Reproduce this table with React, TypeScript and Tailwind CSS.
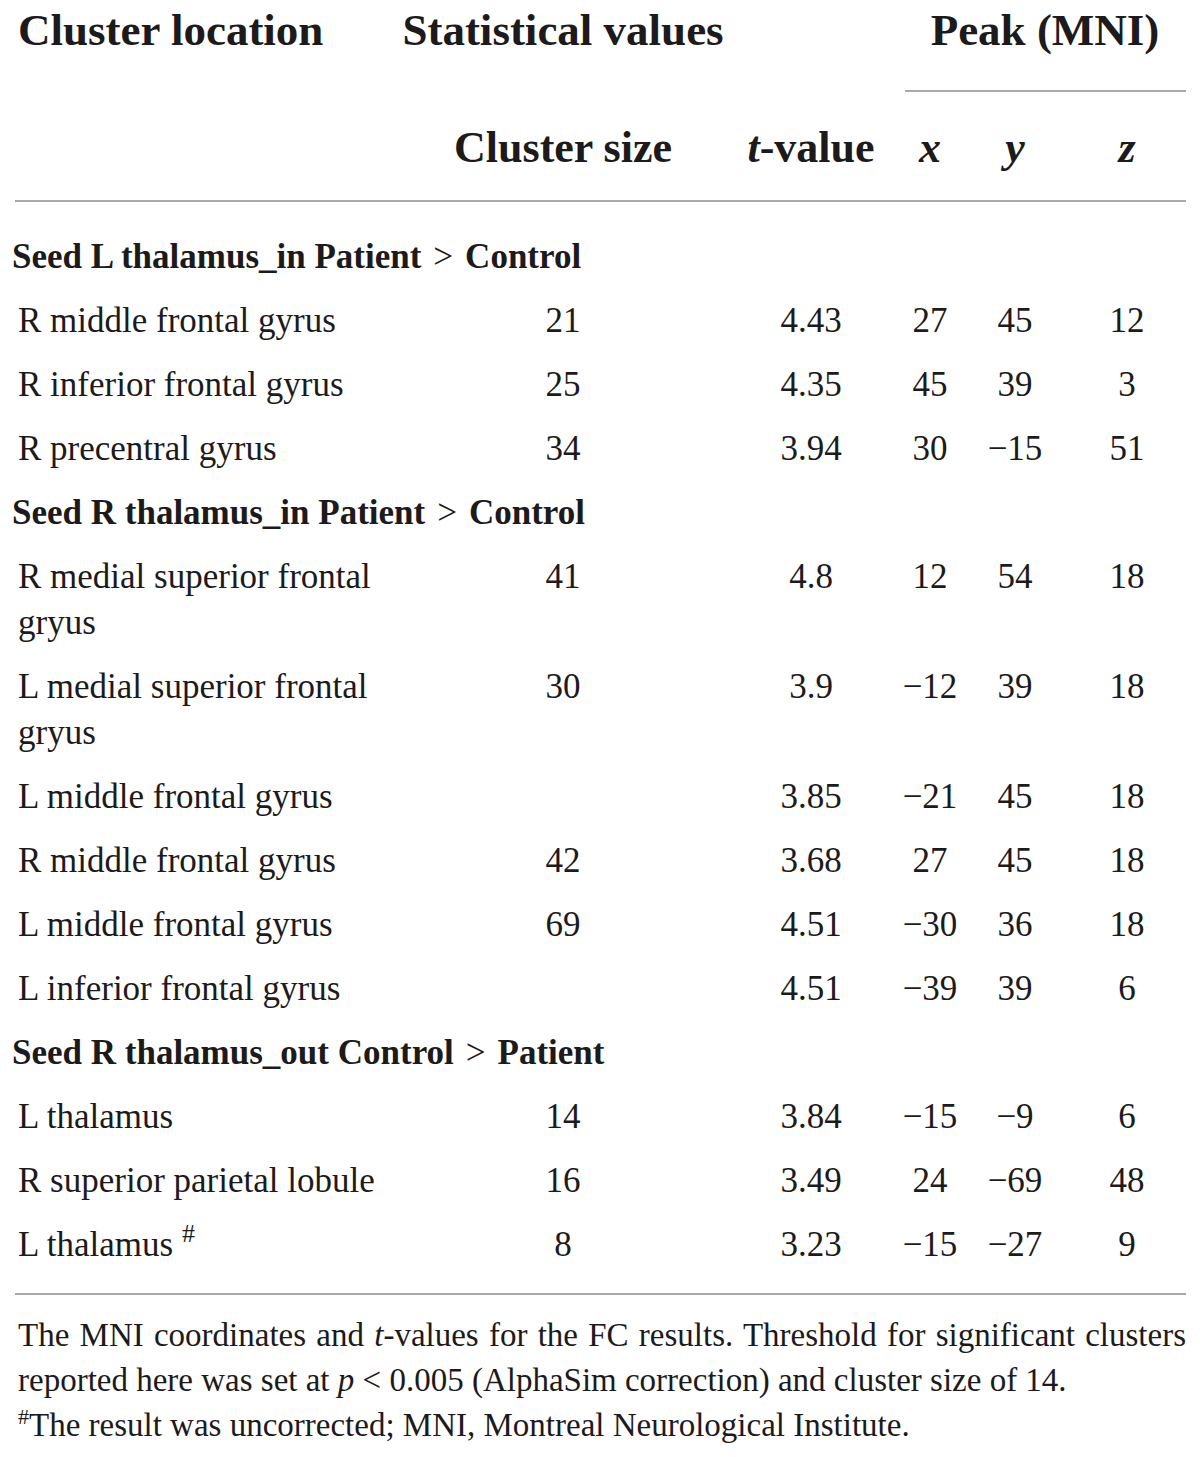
import React from 'react';

// ── Datos de la tabla ─────────────────────────────────────────────────────

type Fila =
  | { tipo: 'seed'; texto: React.ReactNode }
  | { tipo: 'dato'; region: React.ReactNode; size: string; t: string; x: string; y: string; z: string; dosLineas?: boolean };

const M = '\u2212';

// signo ">" en peso normal, con aire a los lados
const Mayor = () => <span className="mx-[12px] font-normal">&gt;</span>;

const FILAS: Fila[] = [
  { tipo: 'seed', texto: <>Seed L thalamus_in Patient<Mayor />Control</> },
  { tipo: 'dato', region: 'R middle frontal gyrus', size: '21', t: '4.43', x: '27', y: '45', z: '12' },
  { tipo: 'dato', region: 'R inferior frontal gyrus', size: '25', t: '4.35', x: '45', y: '39', z: '3' },
  { tipo: 'dato', region: 'R precentral gyrus', size: '34', t: '3.94', x: '30', y: `${M}15`, z: '51' },
  { tipo: 'seed', texto: <>Seed R thalamus_in Patient<Mayor />Control</> },
  { tipo: 'dato', region: 'R medial superior frontal gryus', size: '41', t: '4.8', x: '12', y: '54', z: '18', dosLineas: true },
  { tipo: 'dato', region: 'L medial superior frontal gryus', size: '30', t: '3.9', x: `${M}12`, y: '39', z: '18', dosLineas: true },
  { tipo: 'dato', region: 'L middle frontal gyrus', size: '', t: '3.85', x: `${M}21`, y: '45', z: '18' },
  { tipo: 'dato', region: 'R middle frontal gyrus', size: '42', t: '3.68', x: '27', y: '45', z: '18' },
  { tipo: 'dato', region: 'L middle frontal gyrus', size: '69', t: '4.51', x: `${M}30`, y: '36', z: '18' },
  { tipo: 'dato', region: 'L inferior frontal gyrus', size: '', t: '4.51', x: `${M}39`, y: '39', z: '6' },
  { tipo: 'seed', texto: <>Seed R thalamus_out Control<Mayor />Patient</> },
  { tipo: 'dato', region: 'L thalamus', size: '14', t: '3.84', x: `${M}15`, y: `${M}9`, z: '6' },
  { tipo: 'dato', region: 'R superior parietal lobule', size: '16', t: '3.49', x: '24', y: `${M}69`, z: '48' },
  {
    tipo: 'dato',
    region: <>L thalamus <span className="relative -top-[14px] text-[26px] leading-none">#</span></>,
    size: '8', t: '3.23', x: `${M}15`, y: `${M}27`, z: '9',
  },
];

// ── Estilos reutilizables ──────────────────────────────────────────────────

const columnas = 'grid grid-cols-[430px_266px_194px_80px_90px_134px]';
const linea = 'h-[2px] bg-[#a9a9a9]';

// ── Componente ────────────────────────────────────────────────────────────

export default function App() {
  return (
    <div
      className="w-[1200px] min-h-[1457px] bg-white text-[#1c1a1b]"
      style={{ fontFamily: '"Liberation Serif", "Times New Roman", serif' }}
    >
      {/* Cabecera, primera fila */}
      <div className={`${columnas} text-[45px] font-bold leading-[60px]`}>
        <div className="pl-[18px] whitespace-nowrap">Cluster location</div>
        <div className="flex justify-center whitespace-nowrap">Statistical values</div>
        <div />
        <div className="col-span-3 flex justify-center whitespace-nowrap pl-[6px]">Peak (MNI)</div>
      </div>

      {/* Línea bajo Peak (MNI) */}
      <div className={`${columnas} mt-[30px]`}>
        <div className="col-span-3" />
        <div className={`col-span-3 ml-[15px] mr-[8px] ${linea}`} />
      </div>

      {/* Cabecera, segunda fila */}
      <div className={`${columnas} mt-[26px] text-[44px] font-bold leading-[60px]`}>
        <div />
        <div className="text-center whitespace-nowrap">Cluster size</div>
        <div className="pl-[36px] text-center whitespace-nowrap">
          <span className="italic">t</span>-value
        </div>
        <div className="text-center italic">x</div>
        <div className="text-center italic">y</div>
        <div className="text-center italic">z</div>
      </div>

      <div className={`mt-[22px] ml-[15px] mr-[14px] ${linea}`} />

      {/* Cuerpo */}
      <div className="mt-[23px] text-[35px] leading-[46px]">
        {FILAS.map((fila, i) =>
          fila.tipo === 'seed' ? (
            <div key={i} className="h-[64px] pl-[12px] font-bold leading-[64px] whitespace-nowrap">
              {fila.texto}
            </div>
          ) : (
            <div key={i} className={`${columnas} ${fila.dosLineas ? 'h-[110px]' : 'h-[64px]'} py-[9px]`}>
              <div className="pl-[18px] pr-[20px]">{fila.region}</div>
              <div className="text-center">{fila.size}</div>
              <div className="pl-[36px] text-center">{fila.t}</div>
              <div className="text-center">{fila.x}</div>
              <div className="text-center">{fila.y}</div>
              <div className="text-center">{fila.z}</div>
            </div>
          ),
        )}
      </div>

      <div className={`mt-[16px] ml-[15px] mr-[14px] ${linea}`} />

      {/* Nota al pie */}
      <div className="mt-[18px] pl-[18px] pr-[14px] text-[33px] leading-[45px] text-justify">
        <p>
          The MNI coordinates and <span className="italic">t</span>-values for the FC results. Threshold for significant
          clusters reported here was set at <span className="italic">p</span> &lt; 0.005 (AlphaSim correction) and cluster
          size of 14.
        </p>
        <p className="text-left">
          <span className="relative -top-[12px] text-[22px] leading-none">#</span>The result was uncorrected; MNI, Montreal
          Neurological Institute.
        </p>
      </div>
    </div>
  );
}
